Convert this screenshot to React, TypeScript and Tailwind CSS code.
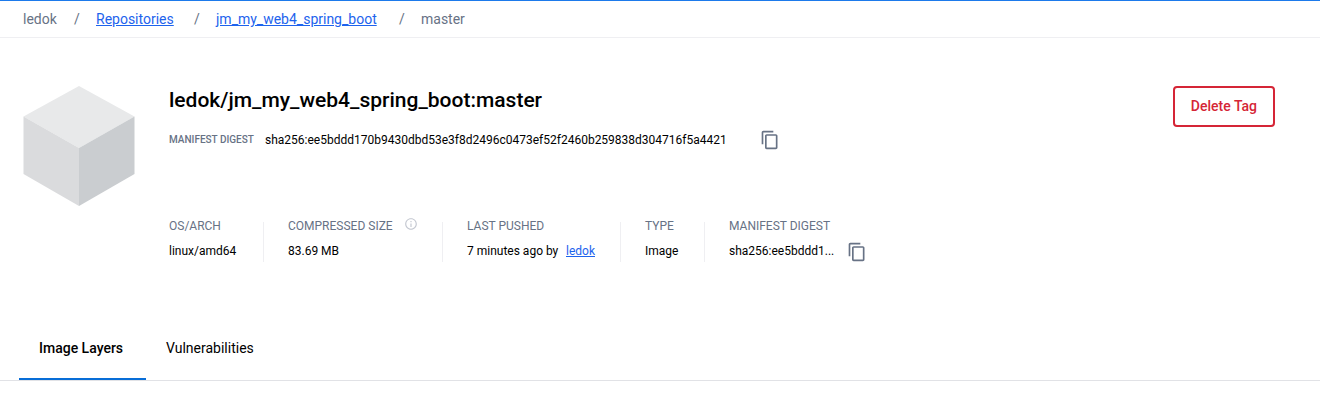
import type { ReactNode } from "react";
import { MdContentCopy, MdInfoOutline } from "react-icons/md";

const DIGEST = "sha256:ee5bddd170b9430dbd53e3f8d2496c0473ef52f2460b259838d304716f5a4421";

function TextLink({ children }: { children: ReactNode }) {
  return (
    <a href="#" className="text-[#1d63ed] underline">
      {children}
    </a>
  );
}

function Separator() {
  return (
    <li aria-hidden="true" className="w-[38px] text-center">
      /
    </li>
  );
}

function CopyButton({ label }: { label: string }) {
  return (
    <button type="button" aria-label={label} className="shrink-0 text-[#677285]">
      <MdContentCopy className="size-5" />
    </button>
  );
}

function Cube() {
  return (
    <svg viewBox="0 0 112 120" className="h-[120px] w-28 shrink-0" aria-hidden="true">
      <path d="M56 0 111.500 30.500 56 62 0.500 30.500Z" fill="#e8e9ea" />
      <path d="M0.500 30.500 56 62V120L0.500 88Z" fill="#dadbdd" />
      <path d="M111.500 30.500 56 62V120L111.500 88Z" fill="#cacdd0" />
    </svg>
  );
}

function Fact({ label, width, children }: { label: ReactNode; width: string; children: ReactNode }) {
  return (
    <div className="flex pl-6 first:pl-0 [&:last-child>span]:hidden">
      <div className={`pr-6 ${width}`}>
        <dt className="flex h-4 items-center text-[#677285]">{label}</dt>
        <dd className="mt-2 flex h-5 items-start leading-[18px]">{children}</dd>
      </div>
      <span className="mt-1 h-10 w-px bg-[#efeff2]" />
    </div>
  );
}

export default function App() {
  return (
    <div className="bg-white font-['Roboto',sans-serif] text-sm text-black">
      <nav
        aria-label="Breadcrumb"
        className="border-t border-b border-t-[#1d7aeb] border-b-[#efeff2] px-[23px] py-2 text-[#677285]"
      >
        <ol className="flex items-center">
          <li className="min-w-[35px]">ledok</li>
          <Separator />
          <li className="min-w-[82px]">
            <TextLink>Repositories</TextLink>
          </li>
          <Separator />
          <li className="min-w-[167px]">
            <TextLink>jm_my_web4_spring_boot</TextLink>
          </li>
          <Separator />
          <li>master</li>
        </ol>
      </nav>

      <main>
        <header className="flex items-start pt-12 pr-[45px] pl-[23px]">
          <Cube />
          <div className="min-w-0 flex-1 pl-[34px]">
            <h1 className="text-[21px] leading-7 font-medium">ledok/jm_my_web4_spring_boot:master</h1>
            <div className="mt-4 flex items-center text-xs">
              <span className="min-w-24 text-[10px] font-medium text-[#677285]">MANIFEST DIGEST</span>
              <span className="min-w-[495px]">{DIGEST}</span>
              <CopyButton label="Copy manifest digest" />
            </div>
            <dl className="mt-[68px] flex text-xs">
              <Fact label="OS/ARCH" width="min-w-[94px]">
                linux/amd64
              </Fact>
              <Fact
                width="min-w-[154px]"
                label={
                  <>
                    <span className="min-w-[116px]">COMPRESSED SIZE</span>
                    <MdInfoOutline className="mb-1 size-3.5 text-[#c4c8d1]" />
                  </>
                }
              >
                83.69 MB
              </Fact>
              <Fact label="LAST PUSHED" width="min-w-[153px]">
                <span className="min-w-[99px]">7 minutes ago by</span>
                <TextLink>ledok</TextLink>
              </Fact>
              <Fact label="TYPE" width="min-w-[59px]">
                Image
              </Fact>
              <Fact label="MANIFEST DIGEST" width="min-w-[130px]">
                <span className="min-w-[118px]">{`${DIGEST.slice(0, 15)}...`}</span>
                <CopyButton label="Copy image digest" />
              </Fact>
            </dl>
          </div>
          <button
            type="button"
            className="h-[41px] shrink-0 rounded border-2 border-[#d52536] px-4 pb-0.5 font-medium text-[#d52536]"
          >
            Delete Tag
          </button>
        </header>

        <div role="tablist" className="mt-14 flex border-b border-[#e1e2e6] pl-[19px]">
          <button
            type="button"
            role="tab"
            aria-selected="true"
            className="h-[62px] min-w-[127px] border-b-2 border-[#086dd7] px-5 text-left font-medium"
          >
            Image Layers
          </button>
          <button
            type="button"
            role="tab"
            aria-selected="false"
            className="h-[62px] min-w-[127px] border-b-2 border-transparent px-5 text-left"
          >
            Vulnerabilities
          </button>
        </div>
      </main>
    </div>
  );
}
